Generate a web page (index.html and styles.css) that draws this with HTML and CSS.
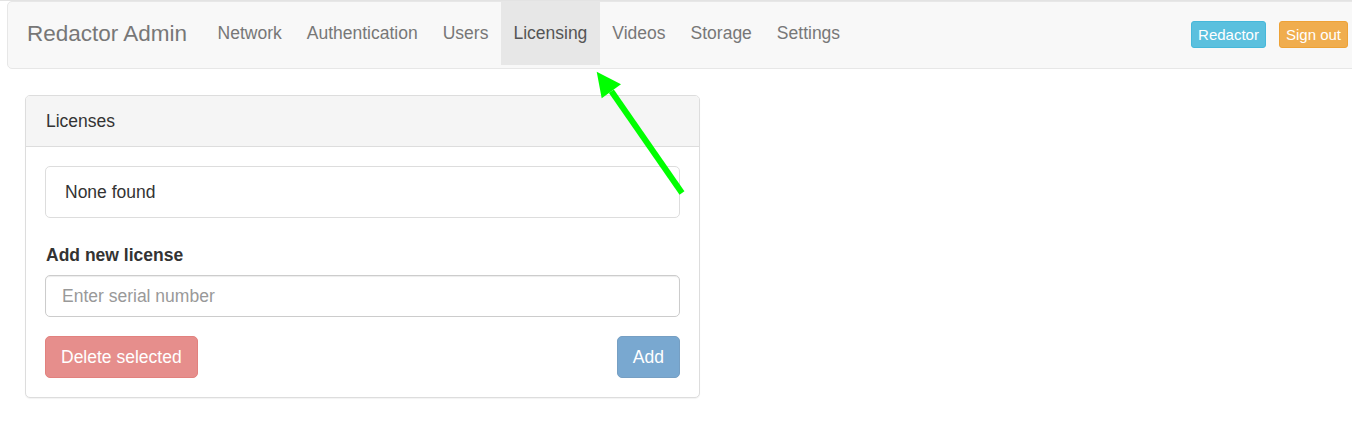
FILE: index.html
```html
<!DOCTYPE html>
<html>
<head>
<meta charset="utf-8">
<link rel="stylesheet" href="styles.css">
</head>
<body>
<div class="topline"></div>
<nav class="navbar">
  <div class="brand">Redactor Admin</div>
  <ul class="nav">
    <li><a>Network</a></li>
    <li><a>Authentication</a></li>
    <li><a>Users</a></li>
    <li class="active"><a>Licensing</a></li>
    <li><a>Videos</a></li>
    <li><a>Storage</a></li>
    <li><a>Settings</a></li>
  </ul>
  <div class="nav-right">
    <span class="nbtn info">Redactor</span>
    <span class="nbtn warning">Sign out</span>
  </div>
</nav>
<main class="container">
  <section class="panel">
    <div class="panel-heading">Licenses</div>
    <div class="panel-body">
      <div class="list-item">None found</div>
      <label class="lbl">Add new license</label>
      <input class="field" type="text" placeholder="Enter serial number">
      <div class="actions">
        <button class="btn danger">Delete selected</button>
        <button class="btn primary">Add</button>
      </div>
    </div>
  </section>
</main>
<svg class="arrow" width="120" height="150" viewBox="0 0 120 150">
  <line x1="21.4" y1="26.3" x2="92" y2="128" stroke="#00ff00" stroke-width="6"/>
  <polygon points="6.7,6.7 31,19.3 11.7,33.3" fill="#00ff00"/>
</svg>
</body>
</html>
```
FILE: styles.css
```css
html, body {
  margin: 0;
  padding: 0;
  background: #fff;
  overflow: hidden;
}
body {
  font-family: "Liberation Sans", Arial, sans-serif;
  font-size: 17.5px;
  line-height: 25px;
  color: #333;
  position: relative;
  height: 425px;
}
.topline {
  height: 1px;
  background: #e3e3e3;
}
.navbar {
  box-sizing: border-box;
  height: 68px;
  margin: 0 -20px 0 7px;
  background: #f8f8f8;
  border: 1px solid #e7e7e7;
  border-radius: 5px;
  display: flex;
  align-items: flex-start;
  padding: 0 23px 0 19px;
}
.brand {
  font-size: 22.5px;
  color: #777;
  line-height: 25px;
  padding-top: 19px;
  padding-right: 18px;
}
.nav {
  list-style: none;
  margin: 0;
  padding: 0;
  display: flex;
}
.nav li a {
  display: block;
  padding: 0 12.5px;
  height: 63px;
  line-height: 63px;
  color: #777;
}
.nav li.active a {
  background: #e7e7e7;
  color: #555;
}
.nav-right {
  margin-left: auto;
  display: flex;
  gap: 13px;
  margin-top: 19px;
}
.nbtn {
  display: block;
  height: 27px;
  line-height: 26px;
  box-sizing: border-box;
  padding: 0 6px;
  font-size: 15px;
  color: #fff;
  border-radius: 3px;
  border: 1px solid transparent;
}
.nbtn.info {
  background: #5bc0de;
  border-color: #46b8da;
}
.nbtn.warning {
  background: #f0ad4e;
  border-color: #eea236;
}
.container {
  padding: 26px 0 0 25px;
}
.panel {
  width: 675px;
  box-sizing: border-box;
  border: 1px solid #ddd;
  border-radius: 5px;
  background: #fff;
  box-shadow: 0 1px 1px rgba(0,0,0,0.05);
}
.panel-heading {
  background: #f5f5f5;
  border-bottom: 1px solid #ddd;
  border-radius: 4px 4px 0 0;
  padding: 12.5px 19px 12.5px 20px;
  color: #333;
}
.panel-body {
  padding: 19px 19px 18.5px 19px;
}
.list-item {
  border: 1px solid #ddd;
  border-radius: 5px;
  padding: 12.5px 19px;
  margin-bottom: 25px;
}
.lbl {
  display: block;
  font-weight: bold;
  margin-bottom: 7px;
  padding-left: 1px;
}
.field {
  display: block;
  box-sizing: border-box;
  width: 100%;
  height: 42px;
  margin: 0 0 19px 0;
  padding: 7.5px 16px;
  font-family: "Liberation Sans", Arial, sans-serif;
  font-size: 17.5px;
  color: #555;
  border: 1px solid #ccc;
  border-radius: 5px;
  box-shadow: inset 0 1px 1px rgba(0,0,0,0.075);
  outline: none;
}
.field::placeholder {
  color: #999;
}
.actions {
  display: flex;
  justify-content: space-between;
}
.btn {
  box-sizing: border-box;
  height: 42px;
  padding: 0 15px;
  font-family: "Liberation Sans", Arial, sans-serif;
  font-size: 17.5px;
  color: #fff;
  border-radius: 5px;
  border: 1px solid transparent;
  opacity: 0.65;
}
.btn.danger {
  background: #d9534f;
  border-color: #d43f3a;
}
.btn.primary {
  background: #337ab7;
  border-color: #2e6da4;
}
.arrow {
  position: absolute;
  left: 590px;
  top: 65px;
}
```
